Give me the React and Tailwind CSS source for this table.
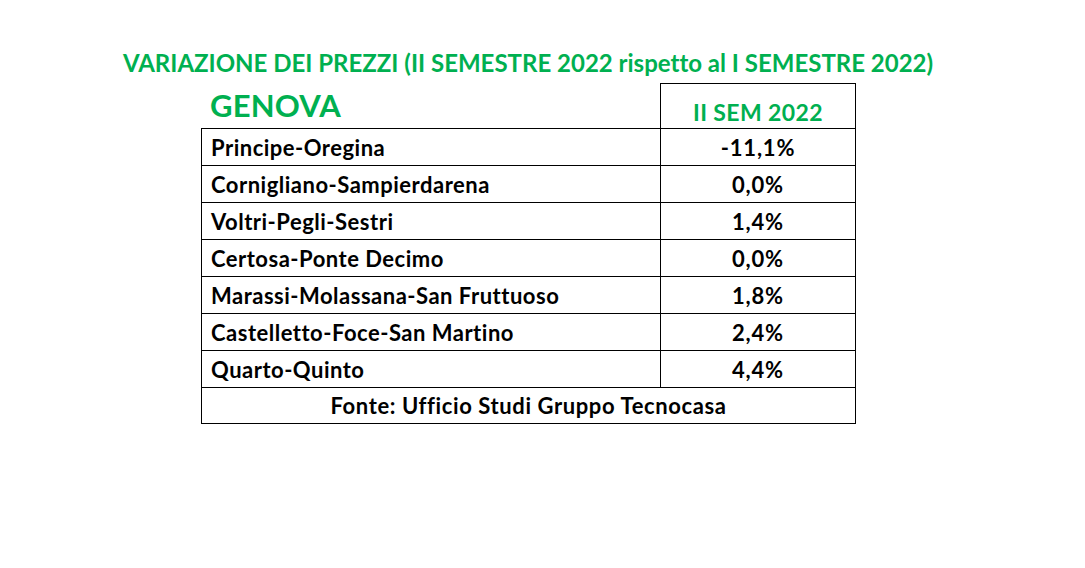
const rows = [
  { zona: "Principe-Oregina", valore: "-11,1%" },
  { zona: "Cornigliano-Sampierdarena", valore: "0,0%" },
  { zona: "Voltri-Pegli-Sestri", valore: "1,4%" },
  { zona: "Certosa-Ponte Decimo", valore: "0,0%" },
  { zona: "Marassi-Molassana-San Fruttuoso", valore: "1,8%" },
  { zona: "Castelletto-Foce-San Martino", valore: "2,4%" },
  { zona: "Quarto-Quinto", valore: "4,4%" }
];

export default function App() {

  return (

    <div className="w-[1085px] h-[568px] bg-white font-['Lato','Open_Sans',sans-serif] font-bold text-black [font-variant-ligatures:none]">

      <h1 className="pt-[48px] text-center w-[1056px] text-[24px] leading-[30px] text-[#00b050]">
        VARIAZIONE DEI PREZZI (II SEMESTRE 2022 rispetto al I SEMESTRE 2022)
      </h1>

      <div className="ml-[201px] w-[655px] mt-[5px]">

        <div className="flex h-[45px]">
          <div className="w-[459px] pl-[9px] pt-[4px] text-[31px] leading-[36px] tracking-[0.2px] text-[#00b050]">
            GENOVA
          </div>
          <div className="flex-1 border-t border-x border-black flex items-end justify-center pb-[2px] text-[23px] leading-[28px] tracking-[0.4px] text-[#00b050]">
            II SEM 2022
          </div>
        </div>

        <div className="border-t border-l border-black">
          {rows.map((row, index) => (
            <div key={index} className="flex h-[37px] border-b border-black">
              <div className="w-[459px] border-r border-black pl-[9px] flex items-center text-[22px] tracking-[0.5px]">
                {row.zona}
              </div>
              <div className="flex-1 border-r border-black flex items-center justify-center text-[22px] tracking-[0.8px]">
                {row.valore}
              </div>
            </div>
          ))}
          <div className="h-[36px] border-b border-r border-black flex items-center justify-center text-[22px] tracking-[0.6px]">
            Fonte: Ufficio Studi Gruppo Tecnocasa
          </div>
        </div>

      </div>

    </div>

  );

}
